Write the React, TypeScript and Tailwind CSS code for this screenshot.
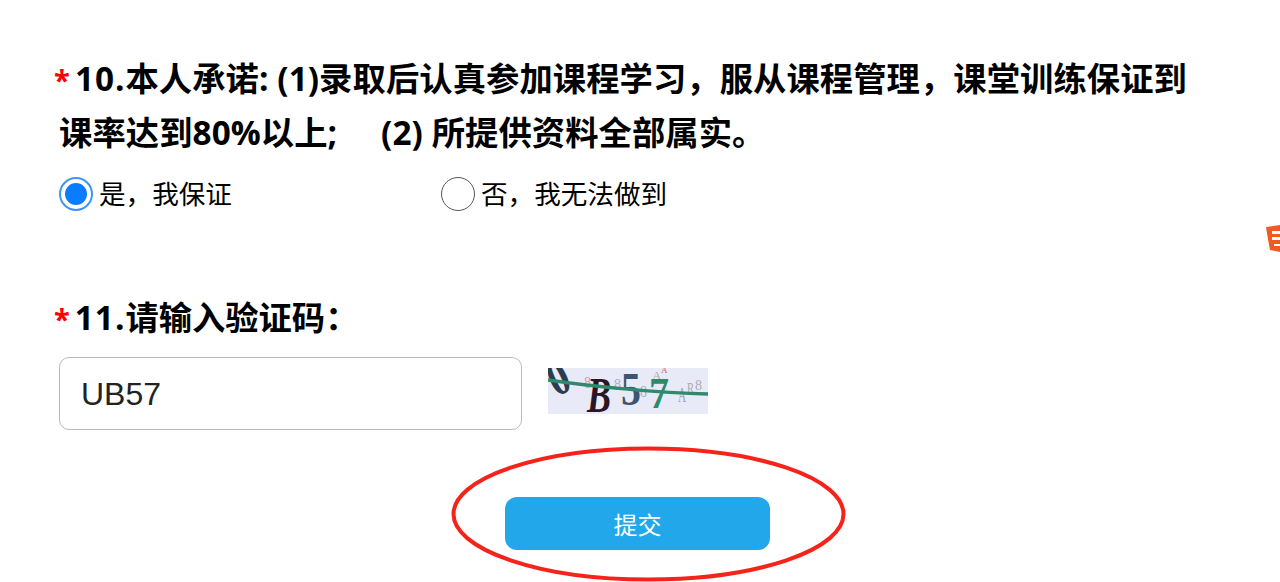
const cjk = "font-['Open_Sans','Noto_Sans_CJK_SC',sans-serif]";

function Radio({ checked, label, width }: { checked?: boolean; label: string; width: string }) {
  return (
    <label className={`flex items-center gap-[6px] ${width}`}>
      {checked ? (
        <span className="flex h-[34px] w-[34px] items-center justify-center rounded-full border-2 border-[#3d94ff] bg-white">
          <span className="h-[22px] w-[22px] rounded-full bg-[#0a7cff]" />
        </span>
      ) : (
        <span className="h-[34px] w-[34px] rounded-full border border-[#555] bg-white" />
      )}
      <span className="pt-[1px] text-[26.6px] leading-[34px] text-black">{label}</span>
    </label>
  );
}

function Captcha() {
  return (
    <svg width="160" height="46" viewBox="0 0 160 46" className="block" aria-label="captcha">
      <rect width="160" height="46" fill="#e9eaf8" />
      <g fontFamily="'Liberation Serif', serif" fontSize="17">
        <text x="36" y="20" fill="#d09aa8" textLength="7" lengthAdjust="spacingAndGlyphs">8</text>
        <text x="66" y="22" fill="#b5a8c4" textLength="7" lengthAdjust="spacingAndGlyphs">8</text>
        <text x="92" y="29" fill="#9fb5b5" textLength="7" lengthAdjust="spacingAndGlyphs">8</text>
        <text x="104" y="12" fill="#a8b0a8" fontSize="13">A</text>
        <text x="113" y="5" fill="#d0606a" fontSize="9">A</text>
        <text x="130" y="34" fill="#a0a0c0" fontSize="20" textLength="8" lengthAdjust="spacingAndGlyphs">A</text>
        <text x="139" y="25" fill="#a8a8a8" fontSize="15" textLength="7" lengthAdjust="spacingAndGlyphs">R</text>
        <text x="147" y="22" fill="#b0a8b0" fontSize="15" textLength="7" lengthAdjust="spacingAndGlyphs">8</text>
      </g>
      <g fontFamily="'Liberation Serif', serif" fontWeight="700">
        <text x="2" y="26" fontSize="48" fill="#2d3d4f" textLength="20" lengthAdjust="spacingAndGlyphs" transform="rotate(-25 12 14)">0</text>
        <text x="39" y="44" fontSize="50" fontStyle="italic" fill="#2b1626" textLength="24" lengthAdjust="spacingAndGlyphs">B</text>
        <text x="73" y="37" fontSize="47" fill="#3d5570" textLength="20" lengthAdjust="spacingAndGlyphs">5</text>
        <text x="101" y="40" fontSize="45" fill="#2f8a6a" textLength="20" lengthAdjust="spacingAndGlyphs">7</text>
      </g>
      <path d="M0 12 C 40 18, 110 25, 160 26" fill="none" stroke="#2f8a6d" strokeWidth="3.5" />
    </svg>
  );
}

export default function App() {
  return (
    <div className={`relative h-[582px] w-[1280px] overflow-hidden bg-white ${cjk}`}>
      <div className="flex flex-col pl-[54px] pt-[52px]">
        <div className="w-[1180px] text-[33.3px] font-bold leading-[53px] tracking-[0.08px] text-black">
          <span className="mr-[5px] text-[29px] text-[#f00]">*</span>
          <span className="tracking-[1px]">10.</span>本人承诺: (1)录取后认真参加课程学习，服从课程管理，课堂训练保证到
          <br />
          <span className="ml-[5px]">
            课率达到80%以上;&nbsp;&nbsp;&nbsp;&nbsp;<span className="ml-[9px]">(2) 所提供资料全部属实。</span>
          </span>
        </div>
        <div className="mt-[17px] flex pl-[5px]">
          <Radio checked label="是，我保证" width="w-[382px]" />
          <Radio label="否，我无法做到" width="w-[300px]" />
        </div>
        <div className="mt-[78px] text-[33.3px] font-bold leading-[56px] text-black">
          <span className="mr-[5px] text-[29px] text-[#f00]">*</span>
          <span className="tracking-[1px]">11.</span>请输入验证码：
        </div>
        <div className="mt-[10px] flex items-start gap-[26px] pl-[5px]">
          <div className="flex h-[73px] w-[463px] items-center rounded-[10px] border border-[#bbb] px-[21px] font-['Liberation_Sans',sans-serif] text-[32px] text-[#222]">
            UB57
          </div>
          <div className="mt-[11px]">
            <Captcha />
          </div>
        </div>
        <div className="mt-[67px] flex pl-[451px]">
          <button className="flex h-[53px] w-[265px] items-center justify-center rounded-[12px] bg-[#22a7ea] pt-[2px] text-[24px] text-white">
            提交
          </button>
        </div>
      </div>

      <svg width="400" height="136" viewBox="0 0 400 136" className="absolute left-[450px] top-[446px]">
        <ellipse cx="198.5" cy="68" rx="195" ry="65.5" fill="none" stroke="#f5231a" strokeWidth="4" />
      </svg>

      <svg width="16" height="32" viewBox="0 0 16 32" className="absolute left-[1264px] top-[224px]">
        <path d="M2 3 L16 1 V28 L6 26 C5 20 3 10 2 3 Z" fill="#f15a22" />
        <rect x="8" y="7" width="8" height="3" fill="#fff" />
        <path d="M8 13 h8 v9 h-6 v-2 h6 v-4 h-8 Z" fill="#fff" />
      </svg>
    </div>
  );
}
